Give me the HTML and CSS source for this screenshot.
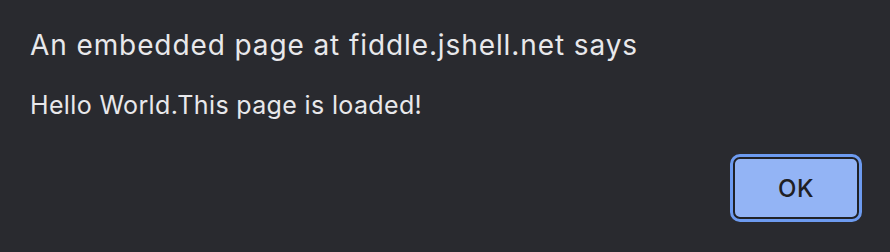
FILE: index.html
```html
<!DOCTYPE html>
<html>
<head>
<meta charset="utf-8">
<link rel="stylesheet" href="styles.css">
</head>
<body>
<div class="dialog">
  <div class="title">An embedded page at fiddle.jshell.net says</div>
  <div class="message">Hello World.This page is loaded!</div>
  <div class="actions">
    <button class="ok">OK</button>
  </div>
</div>
</body>
</html>
```

FILE: styles.css
```css
html, body {
  margin: 0;
  padding: 0;
  background: #292a2f;
}
.dialog {
  width: 890px;
  height: 252px;
  box-sizing: border-box;
  padding: 27px 30px 0 30px;
  font-family: Inter, "Noto Sans", sans-serif;
  color: #e8e8eb;
  display: flex;
  flex-direction: column;
}
.title {
  font-size: 28px;
  line-height: 36px;
  letter-spacing: 0.9px;
  white-space: nowrap;
}
.message {
  font-size: 25px;
  line-height: 30px;
  letter-spacing: 0.35px;
  margin-top: 27px;
  white-space: nowrap;
}
.actions {
  display: flex;
  justify-content: flex-end;
  margin-top: 37px;
  padding-right: 1px;
}
.ok {
  width: 126px;
  height: 62px;
  box-sizing: border-box;
  background: #93b4f5;
  border: 2px solid #202226;
  border-radius: 7px;
  outline: 3px solid #6d9bf0;
  outline-offset: 0;
  font-family: Inter, "Noto Sans", sans-serif;
  font-size: 24px;
  font-weight: 500;
  letter-spacing: 0.5px;
  color: #1f2023;
  padding: 0;
}
```
